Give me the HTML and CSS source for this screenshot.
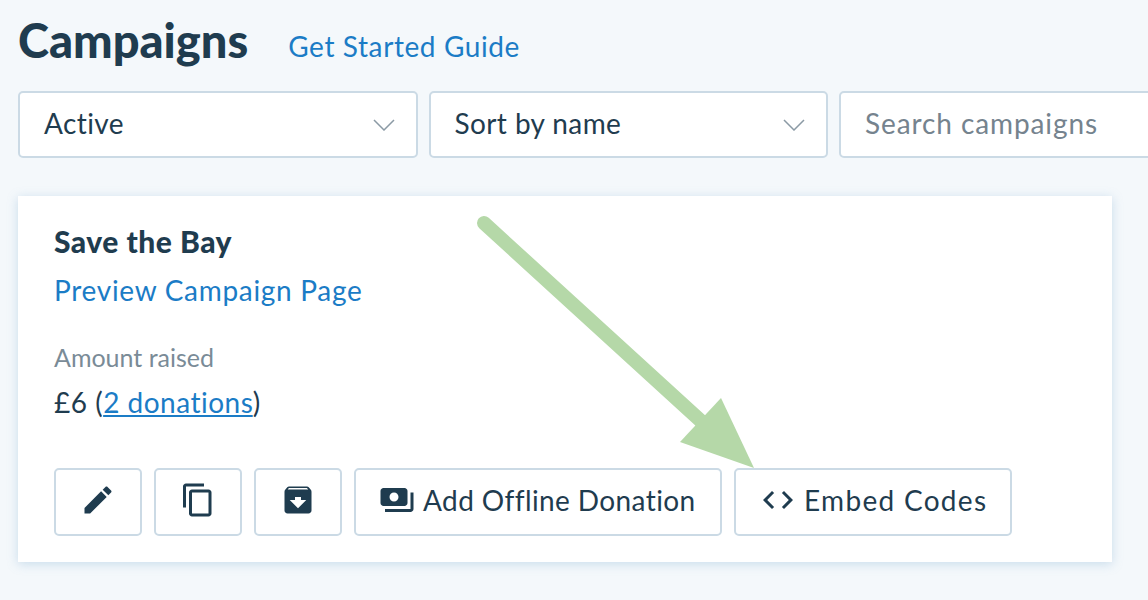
FILE: index.html
```html
<!DOCTYPE html>
<html lang="en">
<head>
  <meta charset="UTF-8" />
  <title>Campaigns</title>
  <link rel="stylesheet" href="styles.css">
</head>
<body>

  <!-- Page heading -->
  <header class="page-head">
    <h1>Campaigns</h1>
    <a class="guide-link" href="#">Get Started Guide</a>
  </header>

  <!-- Filters -->
  <div class="filters">
    <div class="select">
      <span>Active</span>
      <svg class="chevron" viewBox="0 0 22 12"><path d="M1 1l10 10L21 1"/></svg>
    </div>
    <div class="select">
      <span>Sort by name</span>
      <svg class="chevron" viewBox="0 0 22 12"><path d="M1 1l10 10L21 1"/></svg>
    </div>
    <input class="search" type="text" placeholder="Search campaigns" />
  </div>

  <!-- Campaign card -->
  <section class="card">
    <h2>Save the Bay</h2>
    <a class="preview-link" href="#">Preview Campaign Page</a>
    <p class="label">Amount raised</p>
    <p class="amount">£6 (<a href="#">2 donations</a>)</p>
    <div class="actions">
      <button class="btn btn-icon" type="button">
        <svg viewBox="0 0 24 24"><path d="M3 17.25V21h3.75L17.81 9.94l-3.75-3.75L3 17.25zM20.71 7.04c.39-.39.39-1.02 0-1.41l-2.34-2.34c-.39-.39-1.02-.39-1.41 0l-1.83 1.83 3.75 3.75 1.83-1.83z"/></svg>
      </button>
      <button class="btn btn-icon" type="button">
        <svg viewBox="0 0 24 24"><path d="M16 1H4c-1.1 0-2 .9-2 2v14h2V3h12V1zm3 4H8c-1.1 0-2 .9-2 2v14c0 1.1.9 2 2 2h11c1.1 0 2-.9 2-2V7c0-1.1-.9-2-2-2zm0 16H8V7h11v14z"/></svg>
      </button>
      <button class="btn btn-icon" type="button">
        <svg viewBox="0 0 24 24"><path d="M20.54 5.23l-1.39-1.68C18.88 3.21 18.47 3 18 3H6c-.47 0-.88.21-1.16.55L3.46 5.23C3.17 5.57 3 6.02 3 6.5V19c0 1.1.9 2 2 2h14c1.1 0 2-.9 2-2V6.5c0-.48-.17-.93-.46-1.27zM12 17.5L6.5 12H10v-2h4v2h3.5L12 17.5zM5.12 5l.81-1h12l.94 1H5.12z"/></svg>
      </button>
      <button class="btn btn-offline" type="button">
        <svg viewBox="0 0 24 24"><path d="M19 14V6c0-1.1-.9-2-2-2H3c-1.1 0-2 .9-2 2v8c0 1.1.9 2 2 2h14c1.1 0 2-.9 2-2zm-9-1c-1.66 0-3-1.34-3-3s1.34-3 3-3 3 1.34 3 3-1.34 3-3 3zm13-6v11c0 1.1-.9 2-2 2H4v-2h17V7h2z"/></svg>
        Add Offline Donation
      </button>
      <button class="btn btn-embed" type="button">
        <svg viewBox="0 0 24 24"><path d="M9.4 16.6L4.8 12l4.6-4.6L8 6l-6 6 6 6 1.4-1.4zm5.2 0l4.6-4.6-4.6-4.6L16 6l6 6-6 6-1.4-1.4z"/></svg>
        Embed Codes
      </button>
    </div>
  </section>

  <!-- Annotation arrow drawn over the card -->
  <svg class="arrow" viewBox="0 0 1148 600">
    <path class="arrow-line" d="M484 223L702 422"/>
    <path class="arrow-head" d="M721 398L680 442L754 468z"/>
  </svg>

</body>
</html>
```

FILE: styles.css
```css
html, body {
  height: 100%;
}
body {
  margin: 0;
  padding: 0 0 0 18px;
  overflow: hidden;
  position: relative;
  font-family: Lato, "Open Sans", sans-serif;
  font-size: 28px;
  color: #1f3c4f;
  background-color: #f4f8fb;
}
a {
  color: #1b7cc6;
  text-decoration: none;
}
.page-head {
  display: flex;
  align-items: flex-start;
  height: 91px;
  box-sizing: border-box;
  padding-top: 10px;
}
h1 {
  margin: 0;
  font-size: 47px;
  line-height: 60px;
  font-weight: 900;
}
.guide-link {
  margin: 19px 0 0 40px;
  line-height: 34px;
  letter-spacing: 0.6px;
}
.filters {
  display: flex;
  gap: 11px;
  overflow: hidden;
}
.select, .search {
  flex-shrink: 0;
  box-sizing: border-box;
  width: 399.5px;
  height: 67px;
  padding: 0 21px 0 24px;
  background-color: white;
  border: 2px solid #cbdae5;
  border-radius: 5px;
  font-family: inherit;
  font-size: 28px;
  letter-spacing: 0.4px;
  color: inherit;
}
.select {
  display: flex;
  align-items: center;
  justify-content: space-between;
}
.select span {
  padding-bottom: 3px;
}
.search {
  padding-bottom: 3px;
  letter-spacing: 0.9px;
}
.search::placeholder {
  color: #75838e;
  opacity: 1;
}
.chevron {
  width: 22px;
  height: 12px;
  fill: none;
  stroke: #8b9aa5;
  stroke-width: 1.5;
}
.card {
  box-sizing: border-box;
  width: 1094px;
  height: 366px;
  margin-top: 38px;
  padding: 28px 36px 0;
  background-color: white;
  box-shadow: 0 2px 10px rgba(120, 170, 205, 0.35);
}
h2 {
  margin: 0;
  font-size: 30px;
  line-height: 35px;
  font-weight: 900;
  letter-spacing: 0.5px;
}
.preview-link {
  display: block;
  margin-top: 13px;
  line-height: 36px;
  letter-spacing: 0.7px;
}
.label {
  margin: 32px 0 0;
  font-size: 25px;
  line-height: 34px;
  color: #7a8b97;
}
.amount {
  margin: 11px 0 0;
  font-size: 28px;
  line-height: 34px;
  letter-spacing: 0.5px;
}
.amount a {
  text-decoration: underline;
}
.actions {
  display: flex;
  gap: 12px;
  margin-top: 49px;
}
.btn {
  display: flex;
  align-items: center;
  gap: 8px;
  box-sizing: border-box;
  height: 68px;
  padding: 0 0 4px 24px;
  background-color: white;
  border: 2px solid #cbdae5;
  border-radius: 5px;
  font-family: inherit;
  font-size: 28px;
  letter-spacing: 0.35px;
  white-space: nowrap;
  color: inherit;
}
.btn svg {
  width: 36px;
  height: 36px;
  fill: #1f3c4f;
}
.btn-icon {
  justify-content: center;
  width: 88px;
  padding: 0 0 4px;
}
.btn-offline {
  width: 368px;
  padding-left: 23px;
  letter-spacing: 0.4px;
}
.btn-embed {
  width: 278px;
  letter-spacing: 1.3px;
}
.arrow {
  position: absolute;
  top: 0;
  left: 0;
  width: 1148px;
  height: 600px;
  pointer-events: none;
}
.arrow-line {
  fill: none;
  stroke: #b5d8a8;
  stroke-width: 14;
  stroke-linecap: round;
}
.arrow-head {
  fill: #b5d8a8;
}
```
